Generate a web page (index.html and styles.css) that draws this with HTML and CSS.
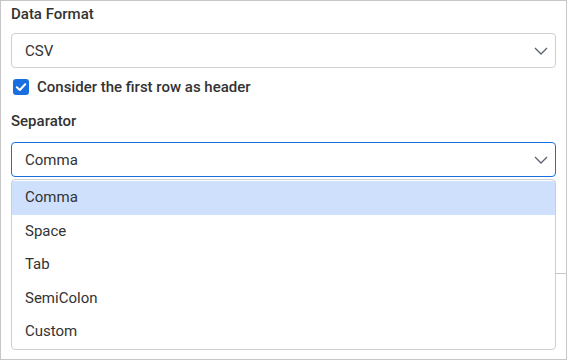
FILE: index.html
```html
<!DOCTYPE html>
<html>
<head>
<meta charset="utf-8">
<link rel="stylesheet" href="styles.css">
</head>
<body>
<div class="panel">
  <div class="label">Data Format</div>
  <div class="select">
    <span class="value">CSV</span>
    <svg class="chev" width="14" height="8" viewBox="0 0 14 8"><polyline points="1,1 7,7 13,1" fill="none" stroke="#5a6270" stroke-width="1.3"/></svg>
  </div>
  <label class="check-row">
    <span class="checkbox">
      <svg width="16" height="16" viewBox="0 0 16 16"><polyline points="3.8,8.2 6.8,11 12.2,5.2" fill="none" stroke="#fff" stroke-width="2" stroke-linecap="round" stroke-linejoin="round"/></svg>
    </span>
    <span class="check-text">Consider the first row as header</span>
  </label>
  <div class="label sep-label">Separator</div>
  <div class="select-wrap">
    <div class="select focused">
      <span class="value">Comma</span>
      <svg class="chev" width="14" height="8" viewBox="0 0 14 8"><polyline points="1,1 7,7 13,1" fill="none" stroke="#5a6270" stroke-width="1.3"/></svg>
    </div>
    <ul class="popup">
      <li class="item selected">Comma</li>
      <li class="item">Space</li>
      <li class="item">Tab</li>
      <li class="item">SemiColon</li>
      <li class="item">Custom</li>
    </ul>
  </div>
  <div class="divider"></div>
</div>
</body>
</html>
```

FILE: styles.css
```css
html, body {
  margin: 0;
  padding: 0;
  background: #fff;
}
body {
  font-family: Roboto, "Liberation Sans", sans-serif;
  font-size: 15px;
  color: #333;
}
.panel {
  box-sizing: border-box;
  width: 567px;
  height: 360px;
  border: 1px solid #c6c6c6;
  padding: 3px 10px 0 10px;
}
.label {
  font-weight: 500;
  line-height: 20px;
  color: #333;
}
.select {
  box-sizing: border-box;
  margin-top: 9px;
  height: 35px;
  border: 1px solid #cfcfcf;
  border-radius: 4px;
  display: flex;
  align-items: center;
  justify-content: space-between;
  padding: 0 7px 0 13px;
  background: #fff;
}
.select.focused {
  border-color: #1a6fe0;
  margin-top: 0;
}
.value {
  line-height: 20px;
  color: #333;
}
.chev {
  display: block;
  margin-top: 1px;
}
.check-row {
  display: flex;
  align-items: center;
  margin-top: 9px;
  height: 20px;
  gap: 8px;
  padding-left: 2px;
}
.checkbox {
  width: 16px;
  height: 16px;
  border-radius: 3px;
  background: #1a6fe0;
  display: block;
}
.checkbox svg {
  display: block;
}
.check-text {
  font-weight: 500;
  line-height: 20px;
  color: #333;
}
.sep-label {
  margin-top: 14px;
  margin-bottom: 11px;
}
.select-wrap {
  position: relative;
}
.popup {
  position: absolute;
  top: calc(100% + 2px);
  left: 0;
  right: 0;
  margin: 0;
  padding: 1px 0 0 0;
  list-style: none;
  background: #fff;
  border: 1px solid #cfcfcf;
  border-radius: 4px;
  z-index: 2;
}
.item {
  height: 33.5px;
  line-height: 33.5px;
  padding-left: 13px;
  color: #333;
}
.item.selected {
  background: #cfe0fc;
}
.divider {
  margin-top: 96px;
  margin-left: 10px;
  margin-right: -10px;
  border-top: 1px solid #c6c6c6;
}
```
